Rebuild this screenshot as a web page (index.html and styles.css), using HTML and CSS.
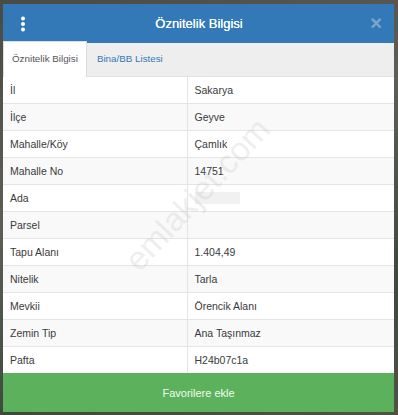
FILE: index.html
```html
<!DOCTYPE html>
<html lang="tr">
<head>
  <meta charset="UTF-8">
  <meta name="viewport" content="width=device-width, initial-scale=1.0">
  <title>Öznitelik Bilgisi</title>
  <link rel="stylesheet" href="styles.css">
</head>
<body>
  <div class="modal">
    <div class="modal-header">
      <span class="menu-icon">
        <svg width="6" height="16" viewBox="0 0 6 16"><circle cx="3" cy="2.5" r="2" fill="#fff"/><circle cx="3" cy="8" r="2" fill="#fff"/><circle cx="3" cy="13.5" r="2" fill="#fff"/></svg>
      </span>
      <div class="modal-title">Öznitelik Bilgisi</div>
      <span class="close-btn">×</span>
    </div>

    <!-- sekmeler -->
    <div class="tabs">
      <div class="tab active">Öznitelik Bilgisi</div>
      <div class="tab">Bina/BB Listesi</div>
    </div>

    <table class="info-table">
      <tr><td>İl</td><td>Sakarya</td></tr>
      <tr><td>İlçe</td><td>Geyve</td></tr>
      <tr><td>Mahalle/Köy</td><td>Çamlık</td></tr>
      <tr><td>Mahalle No</td><td>14751</td></tr>
      <tr><td>Ada</td><td><span class="blur-box"></span></td></tr>
      <tr><td>Parsel</td><td></td></tr>
      <tr><td>Tapu Alanı</td><td>1.404,49</td></tr>
      <tr><td>Nitelik</td><td>Tarla</td></tr>
      <tr><td>Mevkii</td><td>Örencik Alanı</td></tr>
      <tr><td>Zemin Tip</td><td>Ana Taşınmaz</td></tr>
      <tr><td>Pafta</td><td>H24b07c1a</td></tr>
    </table>

    <button class="fav-btn">Favorilere ekle</button>

    <div class="watermark">emlakjet.com</div>
  </div>
</body>
</html>
```

FILE: styles.css
```css
body {
  margin: 0;
  padding: 4px 4px 4px 3px;
  font-family: "Liberation Sans", Arial, sans-serif;
  background: linear-gradient(160deg, #4a4a44 0%, #5d5f55 40%, #3f4a3c 75%, #4c5446 100%);
  height: 407px;
  overflow: hidden;
}
.modal {
  position: relative;
  background: #fff;
  width: 391px;
  overflow: hidden;
}
.modal-header {
  background-color: #3479b7;
  height: 39px;
  display: flex;
  align-items: center;
  padding: 0 12px 0 17px;
  color: #fff;
}
.menu-icon {
  display: flex;
  width: 20px;
}
.modal-title {
  flex: 1;
  text-align: center;
  font-size: 13px;
  padding-right: 4px;
  text-shadow: 0 0 0.4px #fff;
}
.close-btn {
  font-size: 20px;
  font-weight: bold;
  color: #7ea6cc;
  width: 20px;
  text-align: right;
}
.tabs {
  background: #eeeeee;
  height: 34px;
  display: flex;
  align-items: flex-end;
  padding-left: 0;
  border-bottom: 1px solid #e2e2e2;
  box-sizing: border-box;
}
.tab {
  font-size: 9.8px;
  color: #337ab7;
  padding: 11px 8px 12px 8px;
  margin-right: 2px;
}
.tab.active {
  background: #fff;
  color: #555;
  border: 1px solid #ddd;
  border-bottom: none;
  margin-bottom: -1px;
  padding-bottom: 13px;
}
.info-table {
  width: 100%;
  border-collapse: collapse;
  font-size: 10.5px;
  color: #3a3a3a;
}
.info-table td {
  height: 27px;
  padding: 0 0 0 7px;
  border-top: 1px solid #e4e4e4;
  box-sizing: border-box;
  vertical-align: middle;
}
.info-table tr:first-child td {
  border-top: none;
  height: 26px;
}
.info-table td:first-child {
  width: 184px;
  border-right: 1px solid #e4e4e4;
}
.info-table tr:nth-child(even) td {
  background: #f9f9f9;
}
.blur-box {
  display: inline-block;
  width: 45px;
  height: 12px;
  background: #f1f1f1;
  vertical-align: middle;
}
.fav-btn {
  display: block;
  width: 100%;
  height: 39px;
  border: none;
  background: #5cb25c;
  color: #f2faf2;
  font-family: "Liberation Sans", Arial, sans-serif;
  font-size: 11px;
}
/* filigran */
.watermark {
  position: absolute;
  left: 98px;
  top: 173px;
  width: 190px;
  text-align: center;
  font-size: 33px;
  color: rgba(190, 190, 190, 0.25);
  transform: rotate(-47deg);
  pointer-events: none;
}
```
